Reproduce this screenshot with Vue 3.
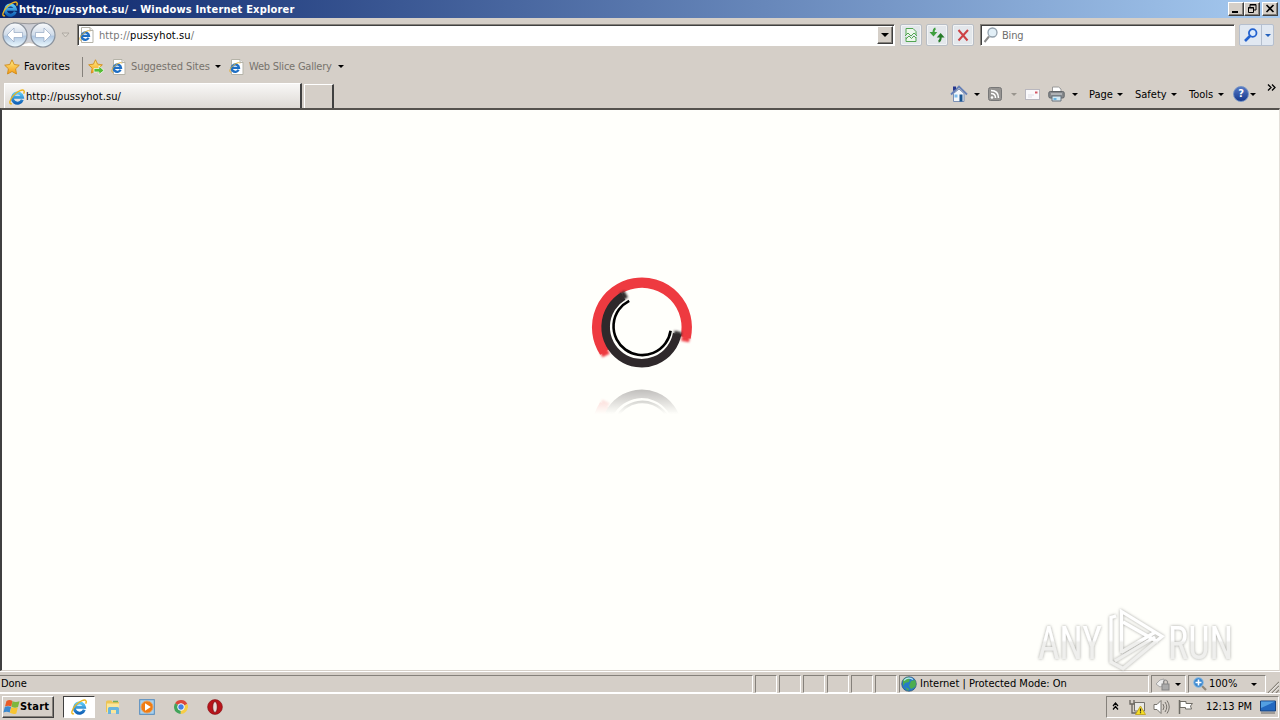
<script setup>
const favLinks = [
  { name: 'Suggested Sites', cls: 'suggested' },
  { name: 'Web Slice Gallery', cls: 'slices' },
];
const menus = [
  { name: 'Page', cls: 'm-page' },
  { name: 'Safety', cls: 'm-safety' },
  { name: 'Tools', cls: 'm-tools' },
];
</script>

<template>
  <div class="screen">
    <svg class="defs" width="0" height="0">
      <defs>
        <linearGradient id="ieBlue" x1="0" y1="0" x2="0" y2="1">
          <stop offset="0" stop-color="#5cc8f5" />
          <stop offset="1" stop-color="#1263b8" />
        </linearGradient>
        <linearGradient id="orb" x1="0" y1="0" x2="0" y2="1">
          <stop offset="0" stop-color="#fafbfc" />
          <stop offset="0.5" stop-color="#cfdbe9" />
          <stop offset="0.55" stop-color="#afc7e2" />
          <stop offset="1" stop-color="#effbff" />
        </linearGradient>
        <linearGradient id="star" x1="0" y1="0" x2="0" y2="1">
          <stop offset="0" stop-color="#fff08a" />
          <stop offset="1" stop-color="#f59a12" />
        </linearGradient>
        <symbol id="ie" viewBox="0 0 16 16">
          <path d="M13.300 10.700A5.100 5.100 0 1 1 13.500 8.200H4.800" fill="none" stroke="url(#ieBlue)" stroke-width="3" />
          <path d="M3 14.800C-.4 15.600.4 11 4.500 6.400 8.700 1.800 14.300-.4 15.100 1.900c.3.8 0 1.900-.5 2.800" fill="none" stroke="#edb51e" stroke-width="1.400" />
        </symbol>
        <symbol id="iePage" viewBox="0 0 16 16">
          <path d="M2.500.5h8.500l3 3v12H2.500z" fill="#fff" stroke="#b5b3a8" />
          <path d="M11 .5v3h3" fill="#eee" stroke="#b5b3a8" />
          <path d="M9.600 10.800A3.700 3.700 0 1 1 10 8.800H3.200" fill="none" stroke="#1f6fc4" stroke-width="2.300" />
          <path d="M2 13.400C-.4 13 1 9.400 3.600 7 6.400 4.200 10.600 2.600 11 4.300" fill="none" stroke="#dfb13c" />
        </symbol>
        <symbol id="starShape" viewBox="0 0 16 16">
          <path d="M8 .8l2.200 4.700 5.100.7-3.700 3.600.9 5.200L8 12.500 3.500 15l.9-5.200L.7 6.200l5.100-.7z" fill="url(#star)" stroke="#d08a17" stroke-width=".9" />
        </symbol>
      </defs>
    </svg>

    <header class="titlebar">
      <svg class="title-ico"><use href="#ie" /></svg>
      <span class="title-text">http://pussyhot.su/ - Windows Internet Explorer</span>
      <div class="win-btns">
        <button class="win-btn"><svg viewBox="0 0 14 12"><path d="M3 9h6" stroke="#000" stroke-width="2" /></svg></button>
        <button class="win-btn">
          <svg viewBox="0 0 14 12"><path d="M5 4V1.500h6V7H9M5 2h6M3 5h6M3.500 4.500v5h5v-5z" fill="none" stroke="#000" /></svg>
        </button>
        <button class="win-btn close"><svg viewBox="0 0 14 12"><path d="M3.500 2l7 7m0-7l-7 7" stroke="#000" stroke-width="1.600" /></svg></button>
      </div>
    </header>

    <nav class="navrow">
      <svg class="orbs" viewBox="0 0 60 28">
        <path d="M16 3h26v21q-13-6-26 0z" fill="#cdced4" />
        <path d="M20 25q8-6 16 0z" fill="#fff" />
        <path d="M12 1.800q16 2 32 0" fill="none" stroke="#98989c" />
        <circle cx="14" cy="14" r="12" fill="url(#orb)" stroke="#8a929d" stroke-width="1.200" />
        <circle cx="42" cy="14" r="12" fill="url(#orb)" stroke="#8a929d" stroke-width="1.200" />
        <path d="M6 14l7-7v4.500h8.500v5H13V21z" fill="#fff" stroke="#94a8c3" stroke-width=".7" />
        <path d="M50 14l-7-7v4.500h-8.500v5H43V21z" fill="#fff" stroke="#94a8c3" stroke-width=".7" />
      </svg>
      <svg class="orb-drop" viewBox="0 0 9 6"><path d="M1 1h7L4.500 5z" fill="#ddd8d0" stroke="#aaa69f" stroke-width=".9" /></svg>
      <div class="address">
        <svg class="ico16"><use href="#iePage" /></svg>
        <span class="url"><i>http://</i>pussyhot.su<i>/</i></span>
        <button class="combo"><b class="arrow"></b></button>
      </div>
      <button class="tool">
        <svg viewBox="0 0 16 16">
          <path d="M3 8V1.500h7l3 3V8M3 10v4.500h10V10" fill="#edf7ec" stroke="#52a552" />
          <path d="M2 9l3-3 3 3 3-3 3 3M3 12l3-3 2.500 2.500L11 9l2 2" fill="none" stroke="#52a552" />
        </svg>
      </button>
      <button class="tool">
        <svg viewBox="0 0 16 16">
          <path d="M6.500 1.500Q4.500 2 4.500 6" fill="none" stroke="#3f9f3e" stroke-width="2" />
          <path d="M.5 5h7.800L4.500 9.500z" fill="#3f9f3e" />
          <path d="M9.500 14.500q2.200-.5 2.200-4.500" fill="none" stroke="#257b27" stroke-width="2" />
          <path d="M7.800 10.500h7.800L11.600 6z" fill="#257b27" />
        </svg>
      </button>
      <button class="tool">
        <svg viewBox="0 0 16 16"><path d="M3.500 3l9 10.500M13 3L3.500 13.500" stroke="#cd4144" stroke-width="2" /></svg>
      </button>
      <div class="search">
        <svg class="lens" viewBox="0 0 16 16">
          <path d="M1.500 15l4.500-5.500" stroke="#8b8b8b" stroke-width="2" />
          <circle cx="9.500" cy="5.500" r="4.500" fill="#e2eff7" stroke="#93a1ad" stroke-width="1.300" />
        </svg>
        <span>Bing</span>
      </div>
      <div class="go">
        <svg class="go-lens" viewBox="0 0 16 16">
          <path d="M2 14l5-5" stroke="#2362cf" stroke-width="2.600" />
          <circle cx="9.700" cy="6" r="3.800" fill="#dcebfc" stroke="#2362cf" stroke-width="1.800" />
        </svg>
        <div class="go-drop"><b class="arrow blue"></b></div>
      </div>
    </nav>

    <div class="favrow">
      <svg class="ico16 fav-star"><use href="#starShape" /></svg>
      <span class="fav-label">Favorites</span>
      <svg class="fav-add" viewBox="0 0 17 16">
        <use href="#starShape" width="15" height="15" />
        <path d="M6 9.500h5V7l5 4.500-5 4V13H6z" fill="#55bd35" stroke="#fff" stroke-width=".7" />
      </svg>
      <div v-for="link in favLinks" :key="link.name" class="fav-link" :class="link.cls">
        <svg class="ico16"><use href="#iePage" /></svg>
        <span>{{ link.name }}</span>
        <b class="arrow"></b>
      </div>
    </div>

    <div class="tabrow">
      <div class="tab">
        <svg class="ico16"><use href="#ie" /></svg>
        <span>http://pussyhot.su/</span>
      </div>
      <div class="newtab"></div>
      <div class="commands">
        <svg class="ico18" viewBox="0 0 18 18">
          <path d="M3.500 8.500v8h10.500v-8L9 4z" fill="#f4f7fb" stroke="#7b90b5" />
          <path d="M1 9.500l8-8 8 8" fill="none" stroke="#6680b7" stroke-width="1.800" />
          <path d="M3 6V1.500h3V4" fill="#25368d" />
          <path d="M4.500 9.500h3v3h-3z" fill="#7dbced" />
          <path d="M9.500 9.500h3v7h-3z" fill="#185492" />
        </svg>
        <b class="arrow a-home"></b>
        <svg class="feed" viewBox="0 0 14 14">
          <rect x=".5" y=".5" width="13" height="13" rx="2" fill="#969492" stroke="#777" />
          <circle cx="4" cy="10.500" r="1.300" fill="#fff" />
          <path d="M3 6.500q4.500 0 4.500 4.500M3 3.500q7.500 0 7.500 7.500" fill="none" stroke="#fff" stroke-width="1.500" />
        </svg>
        <b class="arrow dim"></b>
        <svg class="mail" viewBox="0 0 15 11">
          <rect x=".5" y=".5" width="14" height="10" fill="#faf9fb" stroke="#b9b7be" />
          <path d="M10 2.500h2.500v2H10z" fill="#d55664" />
          <path d="M3 6h6M3 8h4" stroke="#dedde5" />
        </svg>
        <svg class="printer" viewBox="0 0 17 16">
          <path d="M4.500 6V1h6l2.500 2v3" fill="#fff" stroke="#999" />
          <rect x=".8" y="5.500" width="15.400" height="6.500" rx="1.500" fill="#85888c" stroke="#606468" />
          <path d="M3 8h11" stroke="#d8dbde" />
          <path d="M4 10h9v5H4z" fill="#d3e8f2" stroke="#68737c" />
          <path d="M5.500 13h3" stroke="#4aa3d8" stroke-width="1.500" />
        </svg>
        <b class="arrow a-print"></b>
        <div v-for="m in menus" :key="m.name" class="menu" :class="m.cls">
          <span>{{ m.name }}</span>
          <b class="arrow"></b>
        </div>
        <div class="help">
          <span>?</span>
        </div>
        <b class="arrow a-help"></b>
        <svg class="chevrons" viewBox="0 0 9 7"><path d="M1 .5l3 3-3 3M5 .5l3 3-3 3" fill="none" stroke="#000" stroke-width="1.300" /></svg>
      </div>
    </div>

    <main class="page">
      <svg class="spinner" viewBox="580 265 125 160">
        <defs>
          <filter id="soft" x="-100%" y="-100%" width="300%" height="300%"><feGaussianBlur stdDeviation="1.200" /></filter>
          <linearGradient id="fade" gradientUnits="userSpaceOnUse" x1="0" y1="388" x2="0" y2="414">
            <stop offset="0" stop-color="#fff" stop-opacity=".32" />
            <stop offset="1" stop-color="#fff" stop-opacity="0" />
          </linearGradient>
          <mask id="fadeMask" maskUnits="userSpaceOnUse" x="580" y="380" width="125" height="45">
            <rect x="580" y="380" width="125" height="45" fill="url(#fade)" />
          </mask>
          <g id="rings" fill="none">
            <path d="M604.500 352A44.800 44.800 0 1 1 685.600 337.500" stroke="#ee3a40" stroke-width="10.400" />
            <path d="M603.200 349.500l2.800 6M686.200 335.500l-1.100 6" stroke="#ee3a40" stroke-width="8" filter="url(#soft)" />
            <path d="M623.200 296.100A36.100 36.100 0 1 0 677.200 333.800" stroke="#2f292b" stroke-width="8.600" />
            <path d="M621.500 296.800l4.600-2.700M677.200 335.500l1.100-4" stroke="#2f292b" stroke-width="7.500" filter="url(#soft)" />
            <path d="M629.200 300.800A28.700 28.700 0 1 0 670.600 330.700" stroke="#000" stroke-width="2.600" />
          </g>
        </defs>
        <use href="#rings" />
        <g mask="url(#fadeMask)"><use href="#rings" transform="translate(0 757) scale(1 -1)" /></g>
      </svg>

      <svg class="watermark" viewBox="1030 600 220 72">
        <defs>
          <filter id="glow" x="-10%" y="-20%" width="120%" height="140%">
            <feDropShadow dx="0" dy="0" stdDeviation="1.800" flood-color="#80807c" flood-opacity=".75" />
          </filter>
          <linearGradient id="wm" gradientUnits="userSpaceOnUse" x1="0" y1="610" x2="0" y2="670">
            <stop offset=".5" stop-color="#fff" />
            <stop offset=".54" stop-color="#efefed" />
          </linearGradient>
        </defs>
        <g filter="url(#glow)">
          <text x="1038" y="659" textLength="64" lengthAdjust="spacingAndGlyphs" class="wm-text" fill="url(#wm)">ANY</text>
          <text x="1168" y="659" textLength="65" lengthAdjust="spacingAndGlyphs" class="wm-text" fill="url(#wm)">RUN</text>
          <path d="M1121.500 653V611.500L1162 636.500 1123 668.500 1111 662V617.500l5-1.500M1123 622l35 20M1121.500 652l34-20M1115 661l40-24" fill="none" stroke="url(#wm)" stroke-width="3.200" />
        </g>
      </svg>
    </main>

    <footer class="status">
      <div class="cell done">Done</div>
      <div v-for="n in 6" :key="n" class="cell blank"></div>
      <div class="cell zone">
        <svg class="ico16" viewBox="0 0 16 16">
          <circle cx="8" cy="8" r="7.300" fill="#277ac9" stroke="#33536f" stroke-width=".7" />
          <path d="M2 4q4-4 7-2l-1 4-4 1-2 3zM10 5l4-1q2 4 0 7l-4 2-2-3zM4 11l4 2-1 2z" fill="#4dad50" />
          <path d="M3 4.500q4-4 9-1" fill="none" stroke="#b3e5f7" stroke-width="1.200" />
        </svg>
        <span>Internet | Protected Mode: On</span>
      </div>
      <div class="cell lock">
        <svg class="ico16" viewBox="0 0 16 16">
          <path d="M1 8l4-4 4-1v6l-4 2z" fill="#eee" stroke="#999" stroke-width=".8" />
          <rect x="7" y="8" width="7" height="6" fill="#aaa" stroke="#858585" />
          <path d="M8.500 8V5.500q2-3 4 0V8" fill="none" stroke="#898989" stroke-width="1.200" />
        </svg>
        <b class="arrow"></b>
      </div>
      <div class="cell zoom">
        <svg viewBox="0 0 14 14">
          <path d="M9 9l4 4" stroke="#908778" stroke-width="2.200" />
          <circle cx="5.500" cy="5.500" r="4.800" fill="#3a87cf" stroke="#8abce5" />
          <path d="M5.500 2.500v6M2.500 5.500h6" stroke="#fff" stroke-width="1.600" />
        </svg>
        <span>100%</span>
        <b class="arrow"></b>
      </div>
      <svg class="grip" viewBox="0 0 12 12"><path d="M1 12L12 1M5 12l7-7M9 12l3-3" stroke="#888379" stroke-width="1.200" /><path d="M2.200 12L12 2.200M6.200 12L12 6.200" stroke="#fff" stroke-width=".7" /></svg>
    </footer>

    <div class="taskbar">
      <button class="start">
        <svg viewBox="0 0 17 16">
          <path d="M3.500 2q3-2 6 0L8.300 7.500Q5.300 6 2 7.500z" fill="#e75b27" />
          <path d="M9.500 2.200q3 1.500 7 0L15 8q-3 1.500-6.500-.2z" fill="#7db73d" />
          <path d="M1.800 7.900q3-1.500 6.300 0l-1.400 5.600q-3-1.500-6.300 0z" fill="#3b89cf" />
          <path d="M8.300 8.200q3 1.500 6.500.2l-1.500 6q-3 1.300-6.400-.6z" fill="#f8c532" />
        </svg>
        <span>Start</span>
      </button>
      <div class="task active"><svg><use href="#ie" /></svg></div>
      <div class="task">
        <svg viewBox="0 0 16 16">
          <path d="M1 3q0-1.500 1.500-1.500h4l1 1.500h6.500V13H1z" fill="#ecc455" />
          <path d="M2 4.500h12V14H2z" fill="#fae69a" />
          <path d="M3 15V9.500q0-1.500 1.500-1.500h8q1.500 0 1.500 1.500V15h-3v-4H6v4z" fill="#68b5dd" />
          <path d="M8 2.500h5" stroke="#6fad5e" stroke-width="1.500" />
        </svg>
      </div>
      <div class="task">
        <svg viewBox="0 0 16 16">
          <rect x=".7" y=".7" width="14.600" height="14.600" fill="#a9d2ef" stroke="#5189bd" />
          <circle cx="8" cy="8" r="6" fill="#f17c12" stroke="#e7a160" />
          <path d="M6 4.300v7.400L11.800 8z" fill="#fff" />
        </svg>
      </div>
      <div class="task">
        <svg viewBox="0 0 16 16">
          <path d="M8 8L2.100 4.300A7 7 0 0 1 14.300 5z" fill="#dc483b" />
          <path d="M8 8H14.800A7 7 0 0 1 7.500 15z" fill="#f7cd45" />
          <path d="M8 8l6.300-3q1 1.500.6 4H8z" fill="#f7cd45" />
          <path d="M8 8L7.500 15A7 7 0 0 1 2.100 4.300z" fill="#42a45a" />
          <circle cx="8" cy="8" r="3.300" fill="#4481e6" stroke="#fff" />
        </svg>
      </div>
      <div class="task">
        <svg viewBox="0 0 16 16">
          <circle cx="8" cy="8" r="7.400" fill="#b9141b" stroke="#821014" stroke-width=".6" />
          <ellipse cx="8" cy="8" rx="2.300" ry="5.500" fill="#e8dcda" stroke="#740c10" stroke-width=".8" />
        </svg>
      </div>
      <div class="tray">
        <svg class="up" viewBox="0 0 7 8"><path d="M1 4l2.500-3L6 4M1 7.500l2.500-3 2.500 3" fill="none" stroke="#000" stroke-width="1.200" /></svg>
        <svg class="net" viewBox="0 0 17 16">
          <path d="M5.500 3.500h10V12h-10z" fill="#e8e8e4" stroke="#74716c" />
          <path d="M1 1v4h4V1M3 5v9h5" fill="none" stroke="#68655f" stroke-width="1.300" />
          <path d="M11.500 7L16.500 15.500h-10z" fill="#f6df25" stroke="#bd9c18" stroke-width=".8" />
          <path d="M11.500 9.500v3M11.500 13.300v1" stroke="#222" stroke-width="1.200" />
        </svg>
        <svg class="vol" viewBox="0 0 17 16">
          <path d="M1 5.500h3l4-4v13l-4-4H1z" fill="#fff" stroke="#77736d" />
          <path d="M10 5q2 3 0 6M12 3q3.500 5 0 10M14 1.500q4.500 6.500 0 13" fill="none" stroke="#77736d" />
        </svg>
        <svg class="flag" viewBox="0 0 17 16">
          <path d="M3 2.500h6v2h6.500L13.500 7l1 3H8.500V8.500H3z" fill="#fff" stroke="#6f6c66" />
          <path d="M2.500 1v14" stroke="#6f6c66" stroke-width="1.500" />
        </svg>
        <span class="clock">12:13 PM</span>
        <svg class="desk" viewBox="0 0 16 14">
          <path d="M.5 1h15v10H.5z" fill="#2268c0" stroke="#19427c" />
          <path d="M1 1.500h14L1 8z" fill="#539fe2" />
          <path d="M1 13h14" stroke="#666" />
        </svg>
      </div>
    </div>
  </div>
</template>

<style>
body {
  margin: 0;
  overflow: hidden;
}
</style>

<style scoped>
.screen {
  width: 1280px;
  height: 720px;
  display: flex;
  flex-direction: column;
  overflow: hidden;
  background: #d5cfc8;
  color: #000;
  font-family: Tahoma, 'DejaVu Sans Condensed', 'DejaVu Sans', sans-serif;
  font-stretch: condensed;
  font-size: 11px;
  line-height: 14px;
  white-space: nowrap;
}

.screen * {
  box-sizing: border-box;
}

.defs {
  position: absolute;
}

svg {
  display: block;
  flex: none;
}

button {
  padding: 0;
  font: inherit;
  flex: none;
}

.ico16 {
  width: 16px;
  height: 16px;
}

.ico18 {
  width: 18px;
  height: 18px;
}

.arrow {
  flex: none;
  width: 0;
  height: 0;
  border: 3px solid transparent;
  border-top-color: #000;
  border-bottom: 0;
}

.arrow.dim {
  border-top-color: #99958e;
}

.arrow.blue {
  border-top-color: #2562bd;
}

.titlebar {
  flex: none;
  height: 18px;
  display: flex;
  align-items: center;
  padding: 0 2px;
  color: #fff;
  font-weight: bold;
  background: linear-gradient(90deg, #0a246a, #a6caf0);
}

.title-ico {
  width: 16px;
  height: 16px;
  margin-right: 1px;
}

.title-text {
  padding-top: 1px;
  letter-spacing: 0.19px;
}

.win-btns {
  margin-left: auto;
  display: flex;
}

.win-btn {
  width: 16px;
  height: 14px;
  background: #d5cfc8;
  border: 1px solid;
  border-color: #fff #404040 #404040 #fff;
  box-shadow: inset -1px -1px #85817b;
}

.win-btn svg {
  width: 14px;
  height: 12px;
}

.win-btn.close {
  margin-left: 2px;
}

.navrow {
  flex: none;
  height: 34px;
  display: flex;
  align-items: center;
  padding-left: 1px;
}

.orbs {
  width: 60px;
  height: 28px;
}

.orb-drop {
  width: 9px;
  height: 6px;
}

.address,
.search {
  display: flex;
  align-items: center;
  background: #fff;
  border: 1px solid;
  border-color: #85817b #fff #fff #85817b;
  box-shadow: inset 1px 1px #404040;
}

.address {
  width: 818px;
  height: 22px;
  margin-left: 7px;
  padding-left: 1px;
}

.url {
  margin-left: 4px;
  padding-top: 2px;
  letter-spacing: 0.1px;
}

.url i {
  font-style: normal;
  color: #777;
}

.combo {
  width: 16px;
  height: 18px;
  margin: 0 1px 0 auto;
  display: flex;
  align-items: center;
  justify-content: center;
  background: #d5cfc8;
  border: 1px solid;
  border-color: #fff #404040 #404040 #fff;
  box-shadow: inset -1px -1px #85817b;
}

.combo .arrow {
  border-width: 4px 4px 0;
}

.tool {
  width: 22px;
  height: 22px;
  margin-left: 4px;
  display: flex;
  align-items: center;
  justify-content: center;
  background: #e3e7eb;
  border: 1px solid #b9bec5;
  border-radius: 2px;
  box-shadow: inset 0 0 0 1px #f2f4f6;
}

.tool svg {
  width: 16px;
  height: 16px;
}

.address + .tool {
  margin-left: 5px;
}

.search {
  width: 255px;
  height: 22px;
  margin-left: 6px;
  padding-left: 2px;
  color: #6e6e6e;
}

.search span {
  padding-top: 2px;
  letter-spacing: -0.2px;
}

.lens {
  width: 16px;
  height: 16px;
  margin-right: 3px;
}

.go {
  width: 35px;
  height: 22px;
  margin-left: 4px;
  display: flex;
  align-items: center;
  background: #e1e8f1;
  border: 1px solid #b5bfce;
  border-radius: 2px;
}

.go-lens {
  width: 16px;
  height: 16px;
  margin: 0 2px 0 3px;
}

.go-drop {
  flex: 1;
  height: 20px;
  display: flex;
  align-items: center;
  justify-content: center;
  border-left: 1px solid #b5bfce;
}

.favrow {
  flex: none;
  height: 29px;
  display: flex;
  align-items: center;
  padding-left: 4px;
}

.fav-label {
  width: 58px;
  margin-left: 4px;
  letter-spacing: 0.15px;
}

.fav-add {
  box-sizing: content-box;
  width: 17px;
  height: 20px;
  margin-right: 6px;
  padding-left: 5px;
  border-left: 1px solid #85817b;
}

.fav-link {
  display: flex;
  align-items: center;
  color: #77736d;
}

.fav-link span {
  margin: 0 4px;
  padding-top: 1px;
}

.suggested {
  width: 118px;
}

.slices span {
  margin-right: 6px;
  letter-spacing: -0.22px;
}

.suggested span {
  letter-spacing: -0.08px;
}

.suggested .arrow {
  margin-left: 1px;
}

.tabrow {
  flex: none;
  height: 27px;
  display: flex;
  align-items: flex-end;
  padding-left: 4px;
}

.tab {
  width: 298px;
  height: 25px;
  display: flex;
  align-items: center;
  padding: 1px 0 0 4px;
  background: linear-gradient(#f8f7f6, #dedad5);
  border: 1px solid #fff;
  border-right: 2px solid #404040;
  border-bottom: 0;
}

.tab span {
  margin-left: 1px;
  letter-spacing: 0.1px;
}

.newtab {
  width: 30px;
  height: 24px;
  margin-left: 2px;
  border: 1px solid #fff;
  border-right: 2px solid #404040;
  border-bottom: 0;
}

.commands {
  flex: 1;
  height: 28px;
  display: flex;
  align-items: center;
  padding-left: 616px;
}

.a-home {
  margin: 0 8px 0 6px;
}

.feed {
  width: 14px;
  height: 14px;
  margin-right: 9px;
}

.mail {
  width: 15px;
  height: 11px;
  margin: 0 8px 0 8px;
}

.printer {
  width: 17px;
  height: 16px;
}

.a-print {
  margin: 0 11px 0 7px;
}

.menu {
  display: flex;
  align-items: center;
  justify-content: space-between;
  padding-top: 1px;
}

.m-page {
  width: 34px;
  margin-right: 12px;
}

.m-safety {
  width: 42px;
  margin-right: 12px;
}

.m-tools {
  width: 35px;
  margin-right: 9px;
}

.help {
  width: 16px;
  height: 16px;
  border: 1px solid #7291c4;
  border-radius: 50%;
  background: linear-gradient(#5578c4, #17398f);
  color: #fff;
  font-weight: bold;
  text-align: center;
}

.a-help {
  margin-left: 1px;
}

.chevrons {
  width: 9px;
  height: 7px;
  margin: -13px 0 0 11px;
}

.page {
  flex: none;
  position: relative;
  height: 563px;
  background: #fffffb;
  border: 2px solid #404040;
  border-top-color: #55524e;
  border-right: 1px solid #e3dfd9;
  border-bottom: 1px solid #d5cfc8;
}

.spinner {
  position: absolute;
  left: 578px;
  top: 155px;
  width: 125px;
  height: 160px;
}

.watermark {
  position: absolute;
  left: 1028px;
  top: 490px;
  width: 220px;
  height: 72px;
  overflow: visible;
}

.wm-text {
  font-family: Roboto, 'Liberation Sans', sans-serif;
  font-size: 47px;
  font-weight: 400;
}

.status {
  flex: none;
  height: 23px;
  display: flex;
  padding-top: 3px;
  border-top: 1px solid #fff;
  border-bottom: 1px solid #fff;
}

.cell {
  flex: none;
  height: 18px;
  display: flex;
  align-items: center;
  margin-right: 2px;
  border: 1px solid;
  border-color: #85817b #fff #fff #85817b;
}

.done {
  width: 753px;
  border-left: 0;
  padding-left: 1px;
  letter-spacing: -0.1px;
}

.blank {
  width: 22px;
}

.zone {
  width: 250px;
  padding-left: 1px;
}

.zone span {
  margin-left: 3px;
}

.lock {
  width: 35px;
  padding-left: 3px;
}

.lock .arrow {
  margin-left: 4px;
}

.zoom {
  width: 78px;
  padding-left: 4px;
}

.zoom svg {
  width: 14px;
  height: 14px;
}

.zoom span {
  width: 42px;
  margin-left: 2px;
}

.grip {
  width: 12px;
  height: 12px;
  margin: 6px 0 0 -1px;
}

.taskbar {
  flex: 1;
  display: flex;
  align-items: center;
  padding-left: 2px;
}

.start {
  width: 52px;
  height: 22px;
  display: flex;
  align-items: center;
  background: #d5cfc8;
  border: 1px solid;
  border-color: #fff #404040 #404040 #fff;
  box-shadow: inset -1px -1px #85817b;
  font-weight: bold;
  letter-spacing: 0.2px;
}

.start svg {
  width: 17px;
  height: 16px;
}

.task {
  width: 32px;
  height: 22px;
  margin-right: 2px;
  display: flex;
  align-items: center;
  justify-content: center;
}

.task svg {
  width: 16px;
  height: 16px;
}

.task.active {
  margin-left: 9px;
  background: #fff;
  border: 1px solid;
  border-color: #404040 #fff #fff #404040;
}

.tray {
  width: 173px;
  height: 22px;
  margin-left: auto;
  margin-right: 1px;
  display: flex;
  align-items: center;
  border: 1px solid;
  border-color: #85817b #fff #fff #85817b;
}

.up {
  width: 7px;
  height: 8px;
  margin: 0 10px 2px 5px;
}

.net,
.vol,
.flag {
  width: 17px;
  height: 16px;
  margin-right: 7px;
}

.clock {
  width: 54px;
  margin-left: 5px;
}

.desk {
  width: 16px;
  height: 14px;
}
</style>
